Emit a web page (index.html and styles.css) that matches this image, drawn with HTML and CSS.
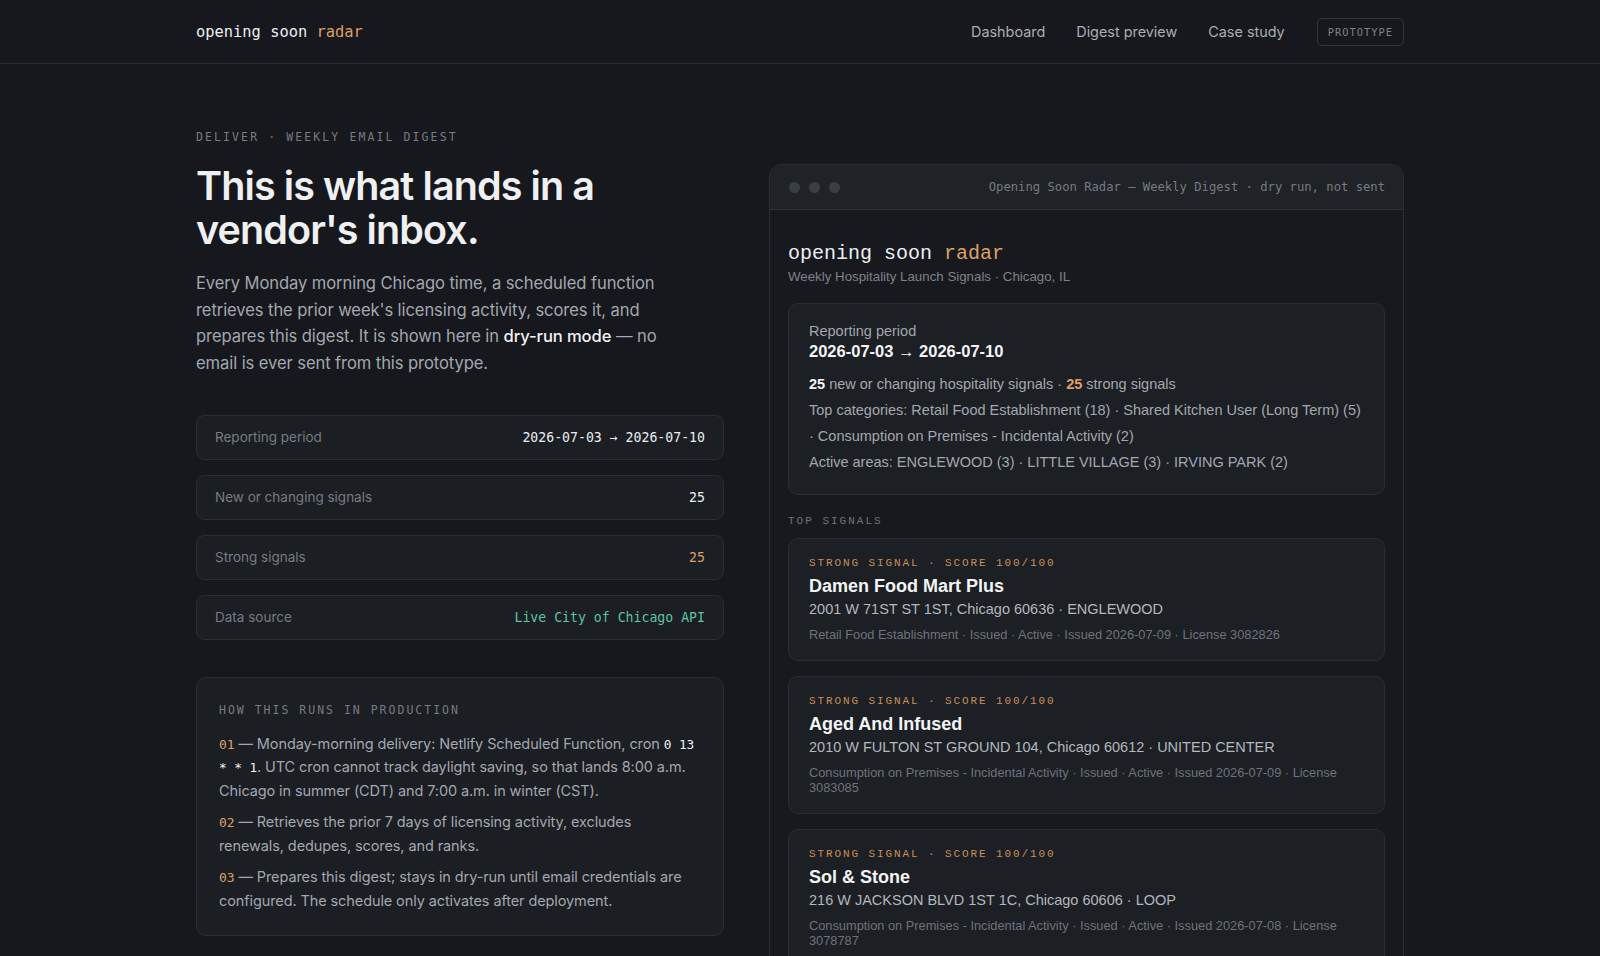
FILE: index.html
```html
<!DOCTYPE html>
<html lang="en">
<head>
    <meta charset="UTF-8">
    <meta name="viewport" content="width=device-width, initial-scale=1.0">
    <title>Digest preview · Opening Soon Radar</title>
    <link rel="stylesheet" href="styles.css">
</head>
<body>
    <header class="topbar">
        <div class="wrap topbar-inner">
            <a class="logo" href="#">opening soon <span class="accent">radar</span></a>
            <nav class="nav">
                <a href="#">Dashboard</a>
                <a href="#">Digest preview</a>
                <a href="#">Case study</a>
                <span class="badge">PROTOTYPE</span>
            </nav>
        </div>
    </header>

    <main class="wrap page">
        <section class="intro">
            <p class="eyebrow">DELIVER · WEEKLY EMAIL DIGEST</p>
            <h1>This is what lands in a vendor's inbox.</h1>
            <p class="lead">Every Monday morning Chicago time, a scheduled function retrieves the prior week's licensing activity, scores it, and prepares this digest. It is shown here in <strong>dry-run mode</strong> — no email is ever sent from this prototype.</p>

            <div class="stats">
                <div class="stat"><span>Reporting period</span><b>2026-07-03 → 2026-07-10</b></div>
                <div class="stat"><span>New or changing signals</span><b>25</b></div>
                <div class="stat"><span>Strong signals</span><b class="amber">25</b></div>
                <div class="stat"><span>Data source</span><b class="green">Live City of Chicago API</b></div>
            </div>

            <div class="howto">
                <p class="eyebrow">HOW THIS RUNS IN PRODUCTION</p>
                <p class="step"><span class="num">01</span> — Monday-morning delivery: Netlify Scheduled Function, cron <code>0 13 * * 1</code>. UTC cron cannot track daylight saving, so that lands 8:00 a.m. Chicago in summer (CDT) and 7:00 a.m. in winter (CST).</p>
                <p class="step"><span class="num">02</span> — Retrieves the prior 7 days of licensing activity, excludes renewals, dedupes, scores, and ranks.</p>
                <p class="step"><span class="num">03</span> — Prepares this digest; stays in dry-run until email credentials are configured. The schedule only activates after deployment.</p>
            </div>
        </section>

        <section class="mail">
            <div class="mail-bar">
                <div class="dots"><i></i><i></i><i></i></div>
                <span class="mail-title">Opening Soon Radar — Weekly Digest · dry run, not sent</span>
            </div>
            <div class="mail-body">
                <div class="brand">opening soon <span class="accent">radar</span></div>
                <div class="brand-sub">Weekly Hospitality Launch Signals · Chicago, IL</div>

                <div class="summary">
                    <div class="sum-label">Reporting period</div>
                    <div class="sum-date">2026-07-03 → 2026-07-10</div>
                    <p><b>25</b> new or changing hospitality signals · <b class="amber">25</b> strong signals</p>
                    <p>Top categories: Retail Food Establishment (18) · Shared Kitchen User (Long Term) (5) · Consumption on Premises - Incidental Activity (2)</p>
                    <p>Active areas: ENGLEWOOD (3) · LITTLE VILLAGE (3) · IRVING PARK (2)</p>
                </div>

                <div class="top-label">TOP SIGNALS</div>

                <div class="signal">
                    <div class="sig-tag">STRONG SIGNAL · SCORE 100/100</div>
                    <div class="sig-name">Damen Food Mart Plus</div>
                    <div class="sig-addr">2001 W 71ST ST 1ST, Chicago 60636 · ENGLEWOOD</div>
                    <div class="sig-meta">Retail Food Establishment · Issued · Active · Issued 2026-07-09 · License 3082826</div>
                </div>
                <div class="signal">
                    <div class="sig-tag">STRONG SIGNAL · SCORE 100/100</div>
                    <div class="sig-name">Aged And Infused</div>
                    <div class="sig-addr">2010 W FULTON ST GROUND 104, Chicago 60612 · UNITED CENTER</div>
                    <div class="sig-meta">Consumption on Premises - Incidental Activity · Issued · Active · Issued 2026-07-09 · License 3083085</div>
                </div>
                <div class="signal">
                    <div class="sig-tag">STRONG SIGNAL · SCORE 100/100</div>
                    <div class="sig-name">Sol &amp; Stone</div>
                    <div class="sig-addr">216 W JACKSON BLVD 1ST 1C, Chicago 60606 · LOOP</div>
                    <div class="sig-meta">Consumption on Premises - Incidental Activity · Issued · Active · Issued 2026-07-08 · License 3078787</div>
                </div>
            </div>
        </section>
    </main>
</body>
</html>
```

FILE: styles.css
```css
*{
    padding: 0;
    margin: 0;
    box-sizing: border-box;
}
body{
    background: #16181d;
    color: #e6e7ea;
    font-family: Inter, "Noto Sans", sans-serif;
}
a{
    color: inherit;
    text-decoration: none;
}
.wrap{
    width: 1208px;
    margin: 0 auto;
}
.accent{
    color: #dca066;
}
.amber{
    color: #dca066;
}
.green{
    color: #5ec4a0;
}

/* top bar */
.topbar{
    height: 64px;
    border-bottom: 1px solid #2a2d33;
}
.topbar-inner{
    height: 100%;
    display: flex;
    align-items: center;
    justify-content: space-between;
}
.logo{
    font-family: "DejaVu Sans Mono", monospace;
    font-size: 15.4px;
    color: #eceef1;
}
.nav{
    display: flex;
    align-items: center;
    gap: 31px;
    font-size: 14.4px;
    color: #a9adb5;
}
.badge{
    font-family: "DejaVu Sans Mono", monospace;
    font-size: 10.4px;
    letter-spacing: 1px;
    color: #7d828b;
    border: 1px solid #30343b;
    border-radius: 5px;
    padding: 7px 10px;
    margin-left: 1px;
}

/* layout */
.page{
    display: grid;
    grid-template-columns: 528px 1fr;
    gap: 45px;
    padding-top: 66px;
    padding-bottom: 40px;
}
.eyebrow{
    font-family: "DejaVu Sans Mono", monospace;
    font-size: 11.5px;
    letter-spacing: 2.1px;
    color: #767b84;
}
h1{
    margin-top: 20px;
    font-size: 39.5px;
    line-height: 44px;
    font-weight: 600;
    letter-spacing: -0.9px;
    color: #eff0f2;
}
.lead{
    max-width: 480px;
    margin-top: 18px;
    font-size: 16.6px;
    line-height: 26.7px;
    letter-spacing: -0.1px;
    color: #a3a7af;
}
.lead strong{
    font-weight: 500;
    color: #f1f2f4;
}
.stats{
    margin-top: 38px;
    display: flex;
    flex-direction: column;
    gap: 15px;
}
.stat{
    height: 45px;
    display: flex;
    align-items: center;
    justify-content: space-between;
    padding: 0 18px;
    background: #1b1e23;
    border: 1px solid #2a2d34;
    border-radius: 8px;
    font-size: 13.5px;
    color: #767b84;
}
.stat b{
    font-family: "DejaVu Sans Mono", monospace;
    font-weight: 400;
    font-size: 13.2px;
    color: #eceef1;
}
.stat b.amber{
    color: #dca066;
}
.stat b.green{
    color: #5ec4a0;
}
.howto{
    margin-top: 37px;
    background: #1b1e23;
    border: 1px solid #2a2d34;
    border-radius: 10px;
    padding: 25px 26px 15px 22px;
}
.howto .eyebrow{
    margin-bottom: 15px;
    letter-spacing: 2px;
}
.step{
    font-size: 14.5px;
    line-height: 23.5px;
    letter-spacing: -0.1px;
    color: #a3a7af;
    margin-bottom: 8px;
}
.num{
    font-family: "DejaVu Sans Mono", monospace;
    font-size: 13px;
    line-height: 0;
    color: #dca066;
}
code{
    font-family: "DejaVu Sans Mono", monospace;
    font-size: 12.8px;
    line-height: 0;
    color: #f1f2f4;
}

/* email window */
.mail{
    align-self: start;
    margin-top: 34px;
    background: #17191e;
    border: 1px solid #2a2d34;
    border-radius: 12px;
    overflow: hidden;
}
.mail-bar{
    height: 45px;
    display: flex;
    align-items: center;
    justify-content: space-between;
    padding: 0 18px 0 19px;
    background: #1f2227;
    border-bottom: 1px solid #2c3037;
}
.dots{
    display: flex;
    gap: 9px;
}
.dots i{
    width: 11px;
    height: 11px;
    border-radius: 50%;
    background: #3a3e45;
}
.mail-title{
    font-family: "DejaVu Sans Mono", monospace;
    font-size: 12.2px;
    color: #767b84;
}
.mail-body{
    padding: 32px 18px 20px;
    font-family: "Liberation Sans", Arial, sans-serif;
}
.brand{
    font-family: "Liberation Mono", "Courier New", monospace;
    font-size: 20px;
    color: #eceef1;
}
.brand-sub{
    margin-top: 4px;
    font-size: 13.3px;
    color: #7d828b;
}
.summary{
    margin-top: 19px;
    background: #1c1f24;
    border: 1px solid #2a2d34;
    border-radius: 10px;
    padding: 19px 20px 19px;
    font-size: 14.5px;
    color: #a3a7af;
}
.sum-date{
    margin-top: 3px;
    margin-bottom: 10px;
    font-size: 16.5px;
    font-weight: 700;
    color: #f3f4f6;
}
.summary p{
    line-height: 26px;
}
.summary b{
    color: #f3f4f6;
}
.summary b.amber{
    color: #dca066;
}
.top-label{
    margin-top: 20px;
    margin-bottom: 11px;
    font-family: "Liberation Mono", "Courier New", monospace;
    font-size: 11px;
    letter-spacing: 2px;
    color: #6e737c;
}
.signal{
    background: #1c1f24;
    border: 1px solid #2a2d34;
    border-radius: 10px;
    padding: 18px 20px 17px;
    margin-bottom: 15px;
}
.sig-tag{
    font-family: "Liberation Mono", "Courier New", monospace;
    font-size: 11px;
    letter-spacing: 1.9px;
    color: #c98f55;
}
.sig-name{
    margin-top: 7px;
    font-size: 18px;
    font-weight: 700;
    color: #f3f4f6;
}
.sig-addr{
    margin-top: 4px;
    font-size: 14.5px;
    color: #b3b7be;
}
.sig-meta{
    margin-top: 10px;
    font-size: 12.8px;
    line-height: 15.5px;
    color: #6e737c;
}
```
